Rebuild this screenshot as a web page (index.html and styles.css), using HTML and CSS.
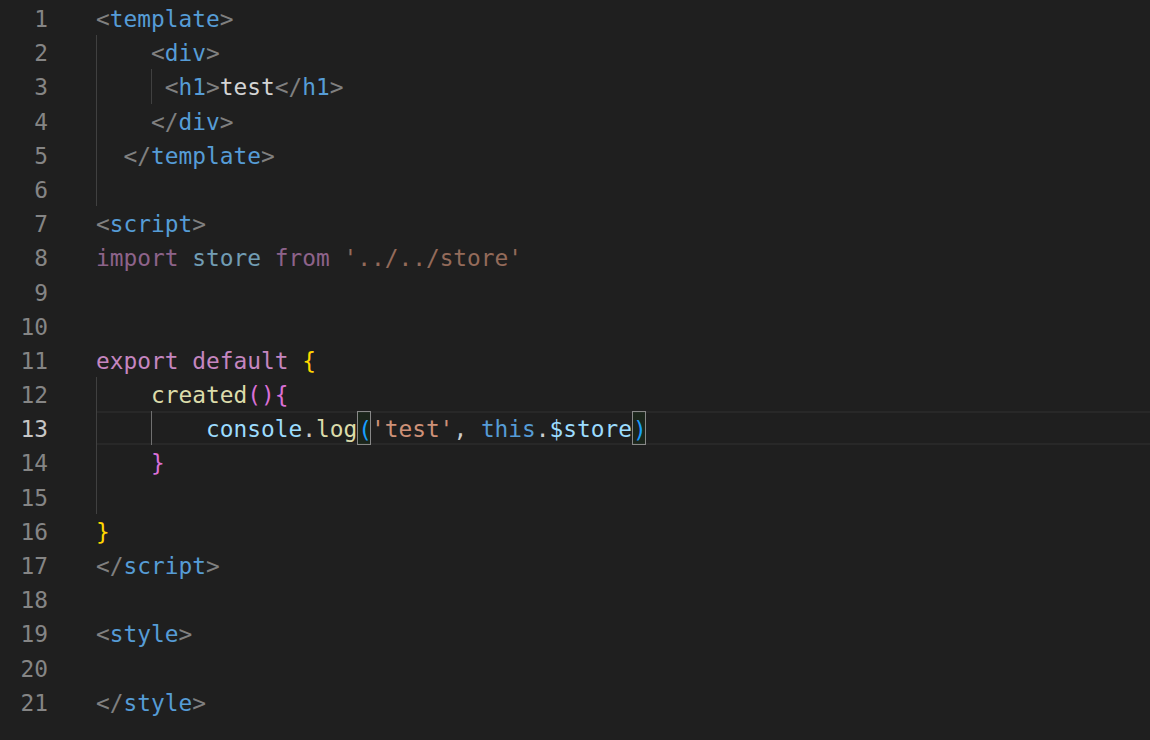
FILE: index.html
```html
<!DOCTYPE html>
<html>
<head>
<meta charset="utf-8">
<link rel="stylesheet" href="styles.css">
</head>
<body>
<div class="editor">
  <div class="gutter">
    <div class="ln">1</div>
    <div class="ln">2</div>
    <div class="ln">3</div>
    <div class="ln">4</div>
    <div class="ln">5</div>
    <div class="ln">6</div>
    <div class="ln">7</div>
    <div class="ln">8</div>
    <div class="ln">9</div>
    <div class="ln">10</div>
    <div class="ln">11</div>
    <div class="ln">12</div>
    <div class="ln active">13</div>
    <div class="ln">14</div>
    <div class="ln">15</div>
    <div class="ln">16</div>
    <div class="ln">17</div>
    <div class="ln">18</div>
    <div class="ln">19</div>
    <div class="ln">20</div>
    <div class="ln">21</div>
  </div>
  <div class="code">
    <div class="line"><span class="p">&lt;</span><span class="tag">template</span><span class="p">&gt;</span></div>
    <div class="line"><span class="guide g0"></span>    <span class="p">&lt;</span><span class="tag">div</span><span class="p">&gt;</span></div>
    <div class="line"><span class="guide g0"></span><span class="guide g4"></span>     <span class="p">&lt;</span><span class="tag">h1</span><span class="p">&gt;</span><span class="txt">test</span><span class="p">&lt;/</span><span class="tag">h1</span><span class="p">&gt;</span></div>
    <div class="line"><span class="guide g0"></span>    <span class="p">&lt;/</span><span class="tag">div</span><span class="p">&gt;</span></div>
    <div class="line"><span class="guide g0"></span>  <span class="p">&lt;/</span><span class="tag">template</span><span class="p">&gt;</span></div>
    <div class="line"><span class="guide g0"></span></div>
    <div class="line"><span class="p">&lt;</span><span class="tag">script</span><span class="p">&gt;</span></div>
    <div class="line"><span class="unused"><span class="kw">import</span> <span class="var">store</span> <span class="kw">from</span> <span class="str">'../../store'</span></span></div>
    <div class="line"></div>
    <div class="line"></div>
    <div class="line"><span class="kw">export</span> <span class="kw">default</span> <span class="b1">{</span></div>
    <div class="line"><span class="guide g0"></span>    <span class="fn">created</span><span class="b2">()</span><span class="b2">{</span></div>
    <div class="line current"><span class="guide g0"></span><span class="guide g4 on"></span>        <span class="var">console</span><span class="pl">.</span><span class="fn">log</span><span class="bm b3">(</span><span class="str">'test'</span><span class="pl">, </span><span class="this">this</span><span class="pl">.</span><span class="var">$store</span><span class="bm b3">)</span></div>
    <div class="line"><span class="guide g0"></span>    <span class="b2">}</span></div>
    <div class="line"><span class="guide g0"></span></div>
    <div class="line"><span class="b1">}</span></div>
    <div class="line"><span class="p">&lt;/</span><span class="tag">script</span><span class="p">&gt;</span></div>
    <div class="line"></div>
    <div class="line"><span class="p">&lt;</span><span class="tag">style</span><span class="p">&gt;</span></div>
    <div class="line"></div>
    <div class="line"><span class="p">&lt;/</span><span class="tag">style</span><span class="p">&gt;</span></div>
  </div>
</div>
</body>
</html>
```

FILE: styles.css
```css
html, body {
  margin: 0;
  padding: 0;
  background: #1f1f1f;
  height: 100%;
  overflow: hidden;
}

.editor {
  display: flex;
  padding-top: 1px;
  font-family: "DejaVu Sans Mono", monospace;
  font-size: 22.84px;
  background: #1f1f1f;
  color: #cccccc;
}

.gutter {
  width: 48px;
  margin-right: 48px;
  flex: none;
}

.ln {
  height: 34.2px;
  line-height: 36px;
  text-align: right;
  color: #858585;
}

.ln.active {
  color: #c6c6c6;
}

.code {
  flex: 1;
}

.line {
  position: relative;
  height: 34.2px;
  line-height: 36px;
  white-space: pre;
}

.line.current::before {
  content: "";
  position: absolute;
  left: 0;
  right: 0;
  top: 0;
  bottom: 0;
  border-top: 2px solid #282828;
  border-bottom: 2px solid #282828;
  pointer-events: none;
}

.guide {
  position: absolute;
  top: 0;
  bottom: 0;
  width: 1px;
  background: #404040;
}

.guide.g0 { left: 0; }
.guide.g4 { left: 55px; }
.guide.on { background: #707070; }

.p { color: #808080; }
.tag { color: #569cd6; }
.txt { color: #d4d4d4; }
.kw { color: #c586c0; }
.var { color: #9cdcfe; }
.str { color: #ce9178; }
.fn { color: #dcdcaa; }
.this { color: #569cd6; }
.pl { color: #cccccc; }
.b1 { color: #ffd700; }
.b2 { color: #da70d6; }
.b3 { color: #179fff; }

.unused { opacity: 0.667; }

.bm {
  display: inline-block;
  height: 34.2px;
  vertical-align: top;
  box-sizing: border-box;
  border: 1px solid #888888;
  background: rgba(0, 100, 0, 0.1);
  width: 13.75px;
  position: relative;
}
```
